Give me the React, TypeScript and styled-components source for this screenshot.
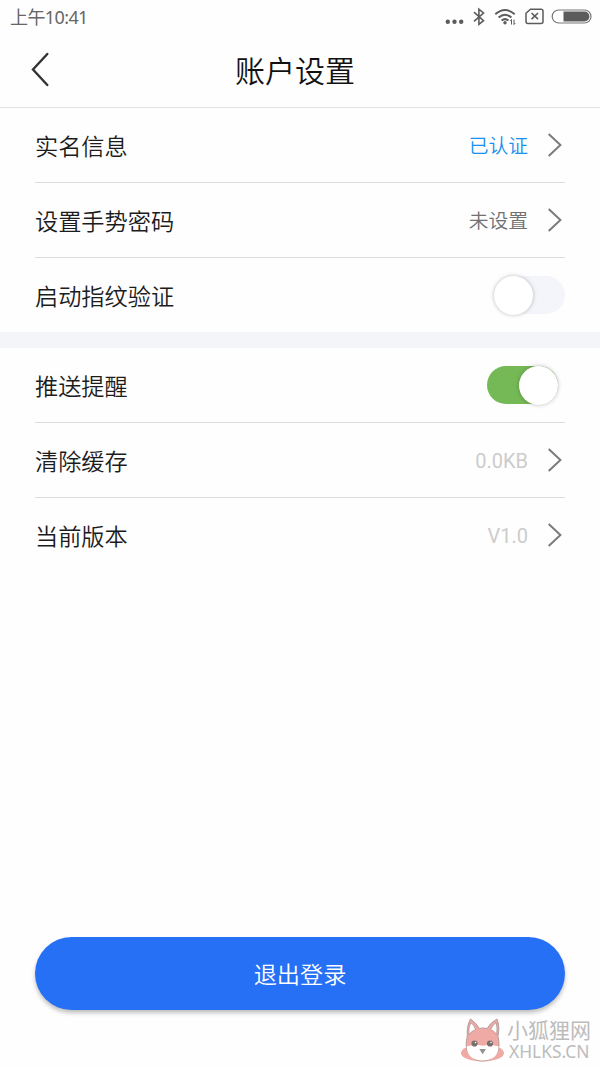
import React from 'react';
import styled, { createGlobalStyle } from 'styled-components';

const GlobalStyle = createGlobalStyle`
  * { box-sizing: border-box; }
  body {
    margin: 0;
    background: #fefefe;
    font-family: Roboto, "Noto Sans CJK SC", sans-serif;
    font-weight: 350;
    color: #222;
  }
`;

const Screen = styled.div`
  position: relative;
  width: 600px;
  height: 1067px;
  display: flex;
  flex-direction: column;
  overflow: hidden;
`;

const StatusBar = styled.div`
  height: 34px;
  flex: none;
  display: flex;
  align-items: center;
  justify-content: space-between;
  padding: 0 8px 0 10px;
`;

const Clock = styled.span`
  font-family: "Noto Sans", "Noto Sans CJK SC", sans-serif;
  font-size: 18px;
  font-weight: 400;
  line-height: 34px;
  letter-spacing: -0.6px;
  color: #666;
`;

const StatusIcons = styled.svg`
  display: block;
`;

const Header = styled.header`
  height: 74px;
  flex: none;
  display: grid;
  grid-template-columns: 80px 1fr 80px;
  align-items: center;
  border-bottom: 1px solid #e2e2e2;
`;

const BackButton = styled.button`
  border: 0;
  padding: 0 0 1px 29px;
  background: none;
  display: flex;
`;

const Title = styled.h1`
  margin: 0;
  text-align: center;
  font-size: 30px;
  font-weight: 350;
  line-height: 44px;
  padding-top: 3px;
  padding-right: 10px;
  color: #111;
`;

const Group = styled.section`
  flex: none;
  padding: 0 35px;
`;

const Divider = styled.div`
  height: 16px;
  flex: none;
  background: #f4f5f9;
`;

const Row = styled.div<{ $last?: boolean; $height?: number }>`
  height: ${(p) => p.$height ?? 75}px;
  display: flex;
  align-items: center;
  border-bottom: ${(p) => (p.$last ? '0' : '1px solid #dcdcdc')};
`;

const Label = styled.span`
  flex: 1;
  font-size: 23.2px;
  line-height: 34px;
  color: #1c1c1c;
  padding-top: 4px;
`;

const Value = styled.span<{ $color: string }>`
  font-size: 19.8px;
  line-height: 30px;
  color: ${(p) => p.$color};
  padding-top: 4px;
  margin-right: 19px;
`;

const Reading = styled(Value)`
  font-size: 20px;
  font-weight: 400;
  padding-top: 2px;
`;

const Chevron = styled.svg`
  display: block;
  margin-right: 3px;
`;

const Track = styled.div<{ $on?: boolean }>`
  width: 71px;
  height: 38px;
  border-radius: 19px;
  margin-right: ${(p) => (p.$on ? 7 : 0)}px;
  background: ${(p) => (p.$on ? '#75b956' : '#f4f5fa')};
  display: flex;
  align-items: center;
  justify-content: ${(p) => (p.$on ? 'flex-end' : 'flex-start')};
`;

const Thumb = styled.div`
  width: 39px;
  height: 39px;
  flex: none;
  border-radius: 50%;
  background: #fff;
  box-shadow: 0 0 4px rgba(0, 0, 0, 0.26);
`;

const Logout = styled.button`
  flex: none;
  height: 73px;
  margin: auto 35px 57px;
  border: 0;
  border-radius: 37px;
  background: #2670f6;
  color: #fff;
  font: inherit;
  font-size: 23.2px;
  line-height: 34px;
  padding: 2px 0 0;
  box-shadow: 0 3px 4px rgba(0, 0, 0, 0.25);
`;

const Watermark = styled.div`
  position: absolute;
  left: 460px;
  top: 1016px;
  display: flex;
  gap: 2px;
`;

const WatermarkText = styled.div`
  display: flex;
  flex-direction: column;
  color: #bcbcbc;
  white-space: nowrap;
  padding-top: 3px;
  font-weight: 400;
`;

const WatermarkName = styled.span`
  font-size: 21px;
  line-height: 24px;
`;

const WatermarkSite = styled.span`
  font-family: "Noto Sans", sans-serif;
  font-size: 17.4px;
  line-height: 16px;
  padding-left: 2px;
`;

const Arrow = () => (
  <Chevron width="15" height="26" viewBox="0 0 15 26" fill="none" stroke="#7b7b7b" strokeWidth="2">
    <path d="M1.7 2L13.4 13L1.7 24" />
  </Chevron>
);

const Switch = ({ on }: { on?: boolean }) => (
  <Track $on={on} role="switch" aria-checked={!!on}>
    <Thumb />
  </Track>
);

const StatusGlyphs = () => (
  <StatusIcons width="150" height="34" viewBox="442 0 150 34" fill="none" stroke="#5c5c5c">
    <g fill="#5c5c5c" stroke="none">
      <circle cx="447.8" cy="21.8" r="2.2" />
      <circle cx="454.5" cy="21.8" r="2.2" />
      <circle cx="461.2" cy="21.8" r="2.2" />
    </g>
    <path d="M474 12.2L483.5 20.7L478.9 24.4V9.2L483.5 13L474 21.4" strokeWidth="1.6" />
    <g strokeWidth="2">
      <path d="M495.3 14.3Q505 5.8 514.7 14.3" />
      <path d="M498.6 17.6Q505 12 511.4 17.6" />
      <path d="M501.6 20.6Q505 17.7 508.4 20.6" />
    </g>
    <circle cx="505" cy="22.8" r="1.7" fill="#5c5c5c" stroke="none" />
    <path d="M511.5 24.5V19.5L510.3 21M514 19.5V24.5L515.2 23" strokeWidth="1" />
    <path d="M530.5 9.2H541Q543 9.2 543 11.2V21.6Q543 23.6 541 23.6H528Q526 23.6 526 21.6V13.3Z" strokeWidth="1.5" />
    <path d="M531.5 13L538 19.2M538 13L531.5 19.2" strokeWidth="1.6" />
    <rect x="552.2" y="10" width="38.8" height="13" rx="6.5" strokeWidth="1.2" stroke="#777" />
    <path d="M563.5 11.6H584.5a4.9 4.9 0 0 1 0 9.8H563.5Z" fill="#5c5c5c" stroke="none" />
  </StatusIcons>
);

const Fox = () => (
  <svg width="45" height="46" viewBox="460 1016 45 46">
    <ellipse cx="482.5" cy="1053" rx="21.5" ry="8.5" fill="#efaaa5" />
    <g stroke="#a98f8d" strokeWidth="0.8">
      <path d="M467.3 1036Q466.5 1026 470.5 1019Q476.5 1023 479.3 1028.5Q483 1027.3 487 1028.5Q490.5 1022.5 497 1019Q500 1026 498 1036Q500.5 1047 497 1053Q491 1061 482.5 1061Q474 1061 468.5 1053Q464.5 1047 467.3 1036Z" fill="#efaaa5" />
      <path d="M468.8 1034.5Q468.3 1027 470.9 1022.5Q474.5 1025.5 475.7 1029.5Q472 1031 468.8 1034.5Z" fill="#fff" />
      <path d="M496.7 1034.5Q497.7 1027 496 1022.5Q492 1025.5 490.7 1029.5Q494 1031 496.7 1034.5Z" fill="#fff" />
    </g>
    <path d="M466.6 1046.5Q471 1044.5 479 1045Q483 1046.5 487 1045Q494 1044.5 498.6 1046.5Q498 1060.4 482.5 1060.4Q467.5 1060.4 466.6 1046.5Z" fill="#fff" />
    <g fill="#77706f">
      <circle cx="474.5" cy="1043.5" r="3.1" />
      <circle cx="490" cy="1043.5" r="3.1" />
      <path d="M479.3 1049H486L482.6 1054.2Z" fill="#929292" />
    </g>
    <circle cx="475.5" cy="1042.5" r="0.8" fill="#fff" />
    <circle cx="491" cy="1042.5" r="0.8" fill="#fff" />
  </svg>
);

export default function App() {
  return (
    <Screen>
      <GlobalStyle />
      <StatusBar>
        <Clock>上午10:41</Clock>
        <StatusGlyphs />
      </StatusBar>
      <Header>
        <BackButton aria-label="返回">
          <svg width="20" height="36" viewBox="0 0 20 36" fill="none" stroke="#333" strokeWidth="2.4" strokeLinecap="round">
            <path d="M18.3 2L4 17.5L18.3 33" />
          </svg>
        </BackButton>
        <Title>账户设置</Title>
      </Header>
      <Group>
        <Row>
          <Label>实名信息</Label>
          <Value $color="#1890f0">已认证</Value>
          <Arrow />
        </Row>
        <Row>
          <Label>设置手势密码</Label>
          <Value $color="#707070">未设置</Value>
          <Arrow />
        </Row>
        <Row $last $height={74}>
          <Label>启动指纹验证</Label>
          <Switch />
        </Row>
      </Group>
      <Divider />
      <Group>
        <Row>
          <Label>推送提醒</Label>
          <Switch on />
        </Row>
        <Row>
          <Label>清除缓存</Label>
          <Reading $color="#ccc">0.0KB</Reading>
          <Arrow />
        </Row>
        <Row $last $height={74}>
          <Label>当前版本</Label>
          <Reading $color="#ccc">V1.0</Reading>
          <Arrow />
        </Row>
      </Group>
      <Logout>退出登录</Logout>
      <Watermark>
        <Fox />
        <WatermarkText>
          <WatermarkName>小狐狸网</WatermarkName>
          <WatermarkSite>XHLKS.CN</WatermarkSite>
        </WatermarkText>
      </Watermark>
    </Screen>
  );
}
